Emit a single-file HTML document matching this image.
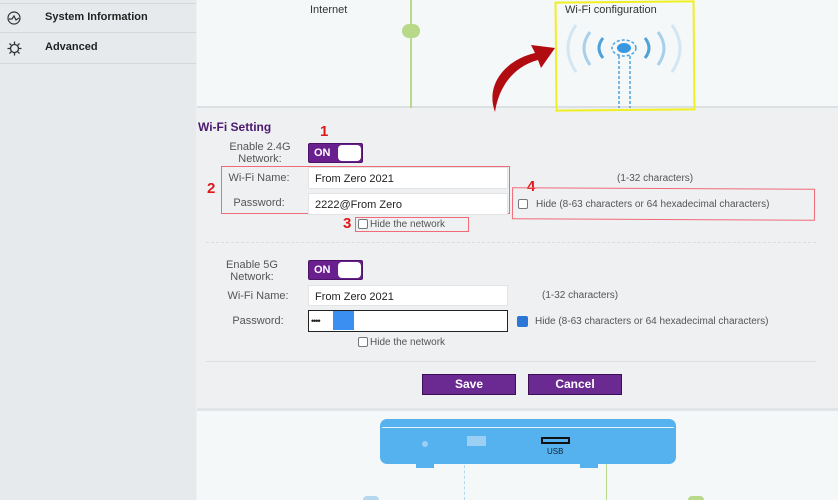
<!DOCTYPE html>
<html><head><style>
*{margin:0;padding:0;box-sizing:border-box}
html,body{width:838px;height:500px;overflow:hidden}
body{position:relative;font-family:"Liberation Sans",sans-serif;background:#eef0f2;color:#444}
.a{position:absolute}
.lbl{position:absolute;font-size:11px;color:#555;text-align:center}
.inp{position:absolute;background:#fff;border:1px solid #e2e4e6;font-size:11px;color:#222;padding:5px 6px}
.tog{position:absolute;width:55px;height:20px;background:#6a1f8f;border:1px solid #4b1268;border-radius:2px}
.tog b{position:absolute;left:5px;top:3px;color:#fff;font-size:11px}
.tog i{position:absolute;right:1px;top:1px;width:23px;height:16px;background:#fff;border-radius:4px}
.red{position:absolute;border:1px solid #f06a78}
.num{position:absolute;color:#e01818;font-weight:bold;font-size:15px}
.cb{position:absolute;width:10px;height:10px;border:1px solid #777;border-radius:2px;background:#fff}
.sm{position:absolute;font-size:10px;color:#555}
.btn{position:absolute;width:94px;height:21px;background:#6a2a92;border:1px solid #3b0f55;color:#fff;font-weight:bold;font-size:12px;text-align:center;line-height:19px}
</style></head><body>
<div class="a" style="left:0;top:0;width:196px;height:500px;background:#e6eaec"></div>
<div class="a" style="left:0;top:3px;width:196px;height:1px;background:#d3d7da"></div>
<div class="a" style="left:0;top:32px;width:196px;height:1px;background:#d3d7da"></div>
<div class="a" style="left:0;top:63px;width:196px;height:1px;background:#d3d7da"></div>
<svg class="a" style="left:6px;top:10px" width="16" height="16"><circle cx="8" cy="8" r="6" fill="none" stroke="#333" stroke-width="1.2"/><path d="M3 9 L6 9 L8 6 L10 10 L13 8" fill="none" stroke="#333" stroke-width="1.2"/></svg>
<div class="a" style="left:45px;top:11px;font-size:11px;font-weight:bold;color:#222">System Information</div>
<svg class="a" style="left:7px;top:41px" width="15" height="15"><circle cx="7.5" cy="7.5" r="4" fill="none" stroke="#333" stroke-width="1.3"/><path d="M7.5 0.5V3M7.5 12V14.5M0.5 7.5H3M12 7.5H14.5M2.5 2.5L4.3 4.3M10.7 10.7L12.5 12.5M2.5 12.5L4.3 10.7M10.7 4.3L12.5 2.5" stroke="#333" stroke-width="1.3"/></svg>
<div class="a" style="left:45px;top:41px;font-size:11px;font-weight:bold;color:#222">Advanced</div>
<div class="a" style="left:197px;top:0;width:641px;height:108px;background:#f5f8f9;border-bottom:2px solid #dde0e2"></div>
<div class="a" style="left:310px;top:4px;font-size:11px;color:#333">Internet</div>
<div class="a" style="left:410px;top:0;width:2px;height:108px;background:#b8d88a"></div>
<div class="a" style="left:402px;top:24px;width:18px;height:14px;border-radius:7px;background:#b8d88a"></div>
<div class="a" style="left:555px;top:1px;width:140px;height:110px;border:2px solid #f0f020;transform:rotate(-0.5deg)"></div>
<div class="a" style="left:565px;top:4px;font-size:11px;color:#333">Wi-Fi configuration</div>
<svg class="a" style="left:560px;top:20px" width="130" height="90">
<path d="M16 5 Q0 28 16 52" stroke="#d4e6f3" stroke-width="3" fill="none"/>
<path d="M30 12 Q18 28 30 45" stroke="#a9d0ea" stroke-width="3" fill="none"/>
<path d="M43 18 Q35 28 43 38" stroke="#4ea2dc" stroke-width="3" fill="none"/>
<path d="M112 5 Q128 28 112 52" stroke="#d4e6f3" stroke-width="3" fill="none"/>
<path d="M98 12 Q110 28 98 45" stroke="#a9d0ea" stroke-width="3" fill="none"/>
<path d="M85 18 Q93 28 85 38" stroke="#4ea2dc" stroke-width="3" fill="none"/>
<ellipse cx="64" cy="28" rx="12" ry="8" fill="none" stroke="#4ea2dc" stroke-width="1.5" stroke-dasharray="3 2"/>
<ellipse cx="64" cy="28" rx="7" ry="5" fill="#3a98e0"/>
<path d="M59 36 V88 M70 36 V88" stroke="#4ea2dc" stroke-width="1.5" stroke-dasharray="3 2"/>
</svg>
<svg class="a" style="left:485px;top:40px" width="75" height="80"><path d="M10 72 C0 45 20 20 50 13 L46 5 L70 8 L56 28 L53 20 C30 26 14 45 10 72Z" fill="#b10d10"/></svg>
<div class="a" style="left:198px;top:120px;font-size:12px;font-weight:bold;color:#4b1a6e">Wi-Fi Setting</div>
<div class="num" style="left:320px;top:123px">1</div>
<div class="lbl" style="left:220px;top:141px;width:80px;line-height:12px">Enable 2.4G<br>Network:</div>
<div class="tog" style="left:308px;top:143px"><b>ON</b><i></i></div>
<div class="red" style="left:221px;top:166px;width:289px;height:48px"></div>
<div class="num" style="left:207px;top:180px">2</div>
<div class="lbl" style="left:222px;top:172px;width:74px">Wi-Fi Name:</div>
<div class="inp" style="left:308px;top:167px;width:200px;height:22px">From Zero 2021</div>
<div class="lbl" style="left:222px;top:197px;width:74px">Password:</div>
<div class="inp" style="left:308px;top:193px;width:200px;height:22px">2222@From Zero</div>
<div class="num" style="left:343px;top:215px">3</div>
<div class="red" style="left:355px;top:217px;width:114px;height:15px"></div>
<div class="cb" style="left:358px;top:219px"></div>
<div class="sm" style="left:370px;top:219px">Hide the network</div>
<div class="sm" style="left:617px;top:173px">(1-32 characters)</div>
<div class="num" style="left:527px;top:178px">4</div>
<div class="red" style="left:512px;top:188px;width:303px;height:32px;transform:rotate(0.3deg)"></div>
<div class="cb" style="left:518px;top:199px"></div>
<div class="sm" style="left:536px;top:199px">Hide (8-63 characters or 64 hexadecimal characters)</div>
<div class="a" style="left:206px;top:242px;width:610px;border-top:1px dashed #dadcde"></div>
<div class="lbl" style="left:220px;top:259px;width:64px;line-height:12px">Enable 5G<br>Network:</div>
<div class="tog" style="left:308px;top:260px"><b>ON</b><i></i></div>
<div class="lbl" style="left:218px;top:290px;width:80px">Wi-Fi Name:</div>
<div class="inp" style="left:308px;top:285px;width:200px;height:21px">From Zero 2021</div>
<div class="sm" style="left:542px;top:290px">(1-32 characters)</div>
<div class="lbl" style="left:218px;top:315px;width:80px">Password:</div>
<div class="inp" style="left:308px;top:310px;width:200px;height:22px;border:1.5px solid #222;padding:0">
<span class="a" style="left:2px;top:5px;font-size:9px;letter-spacing:-1px">••••</span>
<span class="a" style="left:24px;top:0;width:21px;height:19px;background:#3b8ff0"></span></div>
<div class="a" style="left:517px;top:316px;width:11px;height:11px;background:#2b76d6;border-radius:2px"></div>
<div class="sm" style="left:535px;top:316px">Hide (8-63 characters or 64 hexadecimal characters)</div>
<div class="cb" style="left:358px;top:337px"></div>
<div class="sm" style="left:370px;top:337px">Hide the network</div>
<div class="a" style="left:206px;top:361px;width:610px;height:1px;background:#dcdee0"></div>
<div class="btn" style="left:422px;top:374px">Save</div>
<div class="btn" style="left:528px;top:374px">Cancel</div>
<div class="a" style="left:197px;top:408px;width:641px;height:92px;background:#f5f8f9;border-top:3px solid #e2e5e7"></div>
<div class="a" style="left:380px;top:419px;width:296px;height:45px;background:#56b2ee;border-radius:7px"></div>
<div class="a" style="left:382px;top:427px;width:292px;height:1px;background:#e8f4fc"></div>
<div class="a" style="left:422px;top:441px;width:6px;height:6px;border-radius:3px;background:#9ccff4"></div>
<div class="a" style="left:467px;top:436px;width:19px;height:10px;background:#9ccff4"></div>
<div class="a" style="left:541px;top:437px;width:29px;height:7px;border:2px solid #111;background:#56b2ee"></div>
<div class="a" style="left:547px;top:447px;font-size:8px;color:#123">USB</div>
<div class="a" style="left:416px;top:464px;width:18px;height:4px;background:#56b2ee"></div>
<div class="a" style="left:580px;top:464px;width:18px;height:4px;background:#56b2ee"></div>
<div class="a" style="left:464px;top:465px;height:35px;border-left:1px dashed #b5d8ee"></div>
<div class="a" style="left:606px;top:464px;width:1px;height:36px;background:#b8d88a"></div>
<div class="a" style="left:363px;top:496px;width:16px;height:4px;border-radius:8px 8px 0 0;background:#b5d8ee"></div>
<div class="a" style="left:688px;top:496px;width:16px;height:4px;border-radius:8px 8px 0 0;background:#b8d88a"></div>
</body></html>
